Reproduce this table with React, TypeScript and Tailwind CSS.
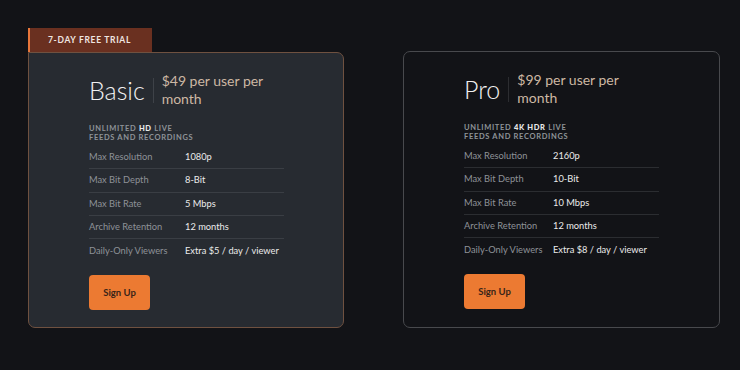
import React from 'react'

// Pricing plans - two cards side by side
type Row = { label: string; value: string }

interface Plan {
  name: string
  price: string
  feature: string
  rows: Row[]
  labelCol: string
}

const plans: Plan[] = [
  {
    name: 'Basic',
    price: '$49 per user per month',
    feature: 'HD',
    labelCol: 'grid-cols-[96px_1fr]',
    rows: [
      { label: 'Max Resolution', value: '1080p' },
      { label: 'Max Bit Depth', value: '8-Bit' },
      { label: 'Max Bit Rate', value: '5 Mbps' },
      { label: 'Archive Retention', value: '12 months' },
      { label: 'Daily-Only Viewers', value: 'Extra $5 / day / viewer' },
    ],
  },
  {
    name: 'Pro',
    price: '$99 per user per month',
    feature: '4K HDR',
    labelCol: 'grid-cols-[89px_1fr]',
    rows: [
      { label: 'Max Resolution', value: '2160p' },
      { label: 'Max Bit Depth', value: '10-Bit' },
      { label: 'Max Bit Rate', value: '10 Mbps' },
      { label: 'Archive Retention', value: '12 months' },
      { label: 'Daily-Only Viewers', value: 'Extra $8 / day / viewer' },
    ],
  },
]

function PlanCard({ plan, featured }: { plan: Plan; featured?: boolean }) {
  return (
    <div
      className={
        featured
          ? 'w-[316px] h-[276px] rounded-[7px] rounded-tl-none border border-[#6f5140] bg-[#272b31] pl-[60px] pt-[19px]'
          : 'w-[317px] h-[277px] rounded-[7px] border border-[#48494d] bg-[#121317] pl-[60px] pt-[19px]'
      }
    >
      {/* Header: plan name + price */}
      <div className="flex items-center">
        <span className="text-[25px] leading-none font-light text-[#f1f1f1]">{plan.name}</span>
        <span
          className={
            featured
              ? 'mx-[8px] h-[25px] w-px bg-[#3e4248]'
              : 'mx-[8px] h-[25px] w-px bg-[#2c2d31]'
          }
        />
        <span className="w-[120px] text-[14px] leading-[18px] text-[#cdb8a4]">{plan.price}</span>
      </div>

      {/* Feature line */}
      <div className="mt-[16px] text-[7.5px] font-bold leading-[9px] tracking-[0.09em] text-[#8f9398] uppercase">
        Unlimited <span className="font-black text-[#e8e8e8]">{plan.feature}</span> live
        <br />
        Feeds and recordings
      </div>

      {/* Spec rows */}
      <div className="mt-[4px] w-[195px]">
        {plan.rows.map((row, i) => (
          <div
            key={row.label}
            className={
              'grid h-[23.3px] items-center text-[9.3px] ' +
              plan.labelCol +
              (i < plan.rows.length - 1
                ? featured
                  ? ' border-b border-[#3a3e44]'
                  : ' border-b border-[#2b2d31]'
                : '')
            }
          >
            <span className="text-[#8e9298]">{row.label}</span>
            <span className="text-[#ececec]">{row.value}</span>
          </div>
        ))}
      </div>

      <button
        type="button"
        className="mt-[13px] flex h-[35px] w-[61px] items-center justify-center rounded-[4px] bg-[#ec7a32] text-[9.5px] font-bold text-[#3a2418]"
      >
        Sign Up
      </button>
    </div>
  )
}

export default function App() {
  return (
    <div
      className="h-[370px] w-[740px] bg-[#121317] pl-[28px] pt-[28px]"
      style={{ fontFamily: 'Lato, "Liberation Sans", sans-serif' }}
    >
      <div className="flex items-end gap-[59px]">
        <div className="flex flex-col">
          <div className="flex h-[24px] w-[124px] items-center border-l-2 border-[#e8763a] bg-[#6a3020] pl-[18px] text-[8.5px] font-bold tracking-[0.08em] text-[#f0e6e0]">
            7-DAY FREE TRIAL
          </div>
          <PlanCard plan={plans[0]} featured />
        </div>
        <PlanCard plan={plans[1]} />
      </div>
    </div>
  )
}
